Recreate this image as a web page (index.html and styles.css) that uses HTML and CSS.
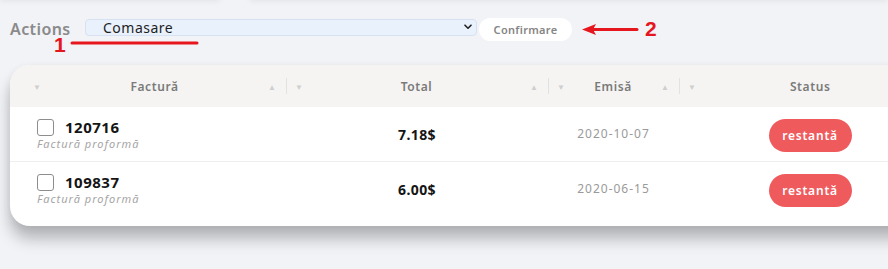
FILE: index.html
```html
<!DOCTYPE html>
<html lang="ro">
<head>
    <meta charset="UTF-8">
    <meta name="viewport" content="width=device-width, initial-scale=1.0">
    <title>Facturi</title>
    <link rel="stylesheet" href="styles.css">
</head>
<body>
    <div class="prev-cards">
        <div class="prev-card left"></div>
        <div class="prev-card right"></div>
    </div>

    <div class="actions-bar">
        <span class="actions-label">Actions</span>
        <div class="select-box">
            <span>Comasare</span>
            <svg class="chevron" width="8" height="6" viewBox="0 0 8 6"><path d="M1 1.2 L4 4.2 L7 1.2" fill="none" stroke="#222" stroke-width="1.6" stroke-linecap="round" stroke-linejoin="round"/></svg>
        </div>
        <button class="confirm-btn">Confirmare</button>
    </div>

    <!-- red annotations on top of the screenshot -->
    <span class="note note-1">1</span>
    <span class="note note-2">2</span>
    <svg class="note-lines" width="888" height="60" viewBox="0 0 888 60">
        <line x1="72" y1="43" x2="197" y2="43" stroke="#e5161d" stroke-width="3" stroke-linecap="round"/>
        <line x1="592" y1="29.5" x2="637" y2="29.5" stroke="#e5161d" stroke-width="3" stroke-linecap="round"/>
        <path d="M582 29.5 L596 24 L593 29.5 L596 35 Z" fill="#e5161d"/>
    </svg>

    <div class="card">
        <div class="table-head">
            <div class="th">
                <span class="sort down">&#9660;</span>
                <span class="th-title">Factură</span>
                <span class="sort up">&#9650;</span>
            </div>
            <div class="th">
                <span class="sort down">&#9660;</span>
                <span class="th-title">Total</span>
                <span class="sort up">&#9650;</span>
            </div>
            <div class="th">
                <span class="sort down">&#9660;</span>
                <span class="th-title">Emisă</span>
                <span class="sort up">&#9650;</span>
            </div>
            <div class="th last">
                <span class="sort down">&#9660;</span>
                <span class="th-title">Status</span>
            </div>
        </div>

        <div class="table-row">
            <div class="td invoice">
                <div class="invoice-line">
                    <span class="checkbox"></span>
                    <span class="invoice-no">120716</span>
                </div>
                <div class="invoice-type">Factură proformă</div>
            </div>
            <div class="td total">7.18$</div>
            <div class="td date">2020-10-07</div>
            <div class="td status"><span class="pill">restantă</span></div>
        </div>

        <div class="table-row no-border">
            <div class="td invoice">
                <div class="invoice-line">
                    <span class="checkbox"></span>
                    <span class="invoice-no">109837</span>
                </div>
                <div class="invoice-type">Factură proformă</div>
            </div>
            <div class="td total">6.00$</div>
            <div class="td date">2020-06-15</div>
            <div class="td status"><span class="pill">restantă</span></div>
        </div>
    </div>
</body>
</html>
```

FILE: styles.css
```css
body {
    margin: 0;
    padding: 0;
    background-color: #f2f3f7;
    font-family: "Noto Sans", "Open Sans", sans-serif;
    overflow: hidden;
    position: relative;
    height: 269px;
}
.prev-cards {
    display: flex;
    gap: 30px;
    height: 30px;
    margin-top: -30px;
}
.prev-card {
    background-color: #f2f3f7;
    box-shadow: 0 1px 6px rgba(0,0,0,0.07);
}
.prev-card.left {
    width: 220px;
}
.prev-card.right {
    flex: 1;
}
.actions-bar {
    display: flex;
    align-items: center;
    padding: 17px 0 0 10px;
    height: 25px;
}
.actions-label {
    font-size: 16px;
    font-weight: 600;
    color: #8a8a8a;
    letter-spacing: 0.4px;
    line-height: 14px;
    width: 75px;
    margin-top: -2px;
}
.select-box {
    width: 392px;
    height: 17px;
    box-sizing: border-box;
    display: flex;
    align-items: center;
    justify-content: space-between;
    padding: 0 4px 0 17px;
    background-color: #e9f1fc;
    border: 1px solid #d6e2f2;
    border-radius: 4px;
    font-size: 14px;
    line-height: 15px;
    color: #1e1e1e;
    letter-spacing: 0.5px;
    margin-top: -5px;
}
.confirm-btn {
    margin-left: 2px;
    height: 23px;
    width: 93px;
    border: none;
    border-radius: 12px;
    background-color: #fff;
    font-family: inherit;
    font-size: 11px;
    font-weight: 600;
    color: #858585;
    letter-spacing: 0.3px;
    padding: 0;
}
.note {
    position: absolute;
    color: #e5161d;
    font-family: "Liberation Sans", Arial, sans-serif;
    font-weight: bold;
    font-size: 21px;
    line-height: 15px;
}
.note-1 {
    left: 54px;
    top: 37px;
}
.note-2 {
    left: 645px;
    top: 21px;
}
.note-lines {
    position: absolute;
    left: 0;
    top: 0;
}
.card {
    margin: 23px 0 0 10px;
    width: 940px;
    background-color: #fff;
    border-radius: 20px;
    overflow: hidden;
    padding-bottom: 9px;
    box-shadow: 0 13px 15px rgba(0,0,0,0.25), 0 2px 8px rgba(0,0,0,0.06);
}
.table-head {
    display: grid;
    grid-template-columns: 262px 262px 131px 262px;
    padding-left: 14px;
    height: 42px;
    background-color: #f5f4f2;
}
.th {
    display: flex;
    align-items: center;
    justify-content: space-between;
    padding: 0 10px 0 9px;
    position: relative;
}
.th + .th::before {
    content: "";
    position: absolute;
    left: 0;
    top: 13px;
    height: 16px;
    border-left: 1px solid #e3e2e0;
}
.th.last {
    justify-content: flex-start;
}
.th.last .th-title {
    margin-left: 94px;
}
.th-title {
    font-size: 12px;
    font-weight: 600;
    color: #7a7a7a;
    letter-spacing: 0.6px;
}
.sort {
    font-size: 8px;
    color: #cfcfcf;
}
.table-row {
    display: grid;
    grid-template-columns: 262px 262px 131px 262px;
    padding-left: 14px;
    height: 55px;
    border-bottom: 1px solid #efefef;
    box-sizing: border-box;
}
.table-row.no-border {
    border-bottom: none;
}
.td {
    display: flex;
    align-items: center;
    justify-content: center;
}
.td.invoice {
    display: block;
    padding: 12px 0 0 13px;
}
.invoice-line {
    display: flex;
    align-items: center;
}
.checkbox {
    width: 17px;
    height: 17px;
    box-sizing: border-box;
    border: 1px solid #8d8d8d;
    border-radius: 3px;
    background-color: #fff;
}
.invoice-no {
    margin-left: 11px;
    font-size: 15px;
    font-weight: 700;
    color: #151515;
    letter-spacing: 0.5px;
    line-height: 17px;
}
.invoice-type {
    margin-top: 1px;
    font-size: 11px;
    font-style: italic;
    color: #a5a5a5;
    letter-spacing: 1px;
    line-height: 14px;
}
.total {
    font-size: 14px;
    font-weight: 700;
    color: #151515;
    letter-spacing: 0.4px;
}
.date {
    font-size: 12px;
    color: #9a9a9a;
    letter-spacing: 1px;
    padding-bottom: 2px;
}
.pill {
    display: inline-flex;
    align-items: center;
    justify-content: center;
    width: 83px;
    height: 33px;
    border-radius: 17px;
    background-color: #ef5a5d;
    color: #fff;
    font-size: 12px;
    font-weight: 600;
    letter-spacing: 0.8px;
    margin-top: 2px;
}
```
